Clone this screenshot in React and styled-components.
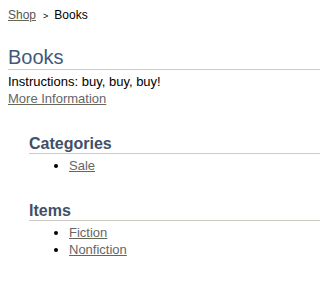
import React from "react";
import styled, { createGlobalStyle } from "styled-components";

const GlobalStyle = createGlobalStyle`
  html, body {
    margin: 0;
    padding: 0;
    background: #fff;
  }
  body {
    font-family: "Liberation Sans", Arial, sans-serif;
    color: #000;
  }
`;

const Page = styled.div`
  padding: 8px 0 8px 8px;
`;

const Breadcrumb = styled.nav`
  font-size: 12px;
  line-height: 15px;
  display: flex;
  align-items: baseline;
`;

const Crumb = styled.a`
  color: #555;
  text-decoration: underline;
  text-decoration-color: #666655;
`;

const Separator = styled.span`
  font-size: 9px;
  margin: 0 6px 0 7px;
  color: #000;
`;

const Title = styled.h1`
  margin: 22px 0 0;
  font-size: 20px;
  line-height: 23px;
  font-weight: normal;
  color: #3f5a7c;
  border-bottom: 1px solid #cbcbc4;
`;

const Intro = styled.div`
  margin-top: 3px;
  font-size: 13px;
  line-height: 17px;
`;

const TextLink = styled.a`
  display: inline-block;
  color: #666;
  text-decoration: underline;
  text-decoration-color: #666655;
`;

const Section = styled.section`
  margin: 28px 0 0 21px;
`;

const SectionTitle = styled.h2`
  margin: 0;
  font-size: 16px;
  line-height: 18px;
  font-weight: bold;
  color: #3f5068;
  border-bottom: 1px solid #cbcbc4;
`;

const List = styled.ul`
  margin: 3px 0 0;
  padding-left: 40px;
  font-size: 13px;
  line-height: 17px;
`;

const sections = [
  { title: "Categories", items: ["Sale"] },
  { title: "Items", items: ["Fiction", "Nonfiction"] },
];

export default function App() {
  return (
    <Page>
      <GlobalStyle />
      <Breadcrumb>
        <Crumb href="#">Shop</Crumb>
        <Separator>&gt;</Separator>
        <span>Books</span>
      </Breadcrumb>
      <Title>Books</Title>
      <Intro>
        <div>Instructions: buy, buy, buy!</div>
        <TextLink href="#">More Information</TextLink>
      </Intro>
      {sections.map((s) => (
        <Section key={s.title}>
          <SectionTitle>{s.title}</SectionTitle>
          <List>
            {s.items.map((item) => (
              <li key={item}>
                <TextLink href="#">{item}</TextLink>
              </li>
            ))}
          </List>
        </Section>
      ))}
    </Page>
  );
}
